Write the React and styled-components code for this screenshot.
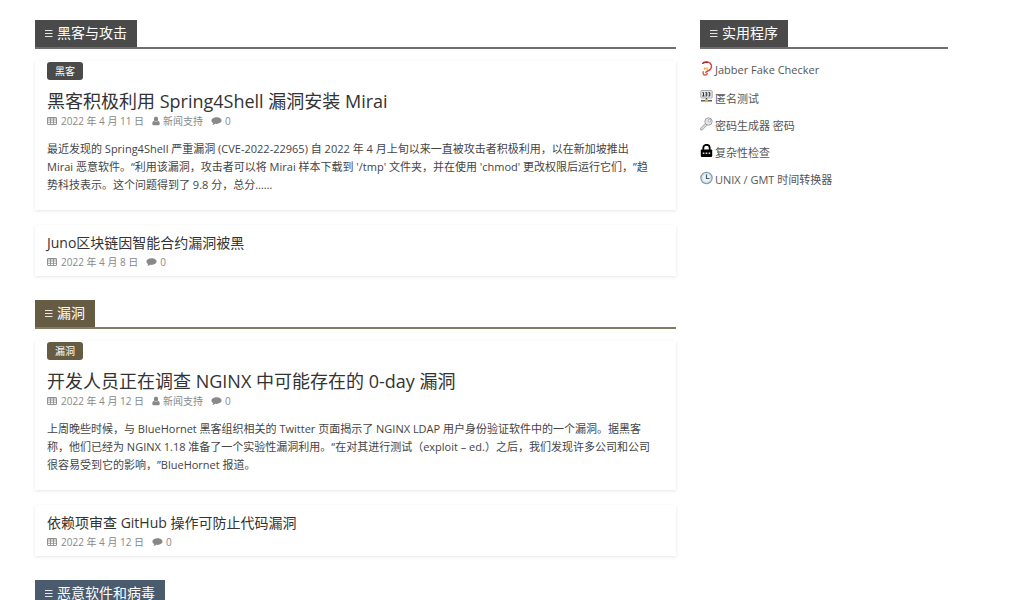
import React from 'react';
import styled, { createGlobalStyle } from 'styled-components';

const GlobalStyle = createGlobalStyle`
  * {
    box-sizing: border-box;
  }

  body {
    margin: 0;
    background: #fff;
    color: #444;
    font-family: "Open Sans", "Noto Sans CJK SC", sans-serif;
    font-size: 11px;
    line-height: 18px;
    text-spacing-trim: space-all;
  }
`;

const Page = styled.div`
  display: flex;
  align-items: flex-start;
  gap: 24px;
  padding: 20px 76px 0 35px;
`;

const Main = styled.main`
  flex: 641 1 0;
  min-width: 0;
`;

const Sidebar = styled.aside`
  flex: 248 1 0;
  min-width: 0;
`;

const Section = styled.section`
  margin-bottom: 24px;
`;

const SectionHeader = styled.header`
  display: flex;
  height: 29px;
  margin-bottom: 12px;
  border-bottom: 2px solid ${(props) => props.$line};
`;

const SectionTitle = styled.h2`
  display: flex;
  align-items: center;
  gap: 4px;
  margin: 0;
  padding: 0 10px 1px;
  background: ${(props) => props.$color};
  color: #fff;
  font-size: 14px;
  font-weight: 400;
  line-height: 26px;
`;

const Card = styled.article`
  margin-bottom: 15px;
  padding: ${(props) => (props.$lead ? '1px 12px 16px' : '8px 12px 5px')};
  box-shadow: 0 1px 3px rgba(0, 0, 0, 0.1);
`;

const Tag = styled.a`
  display: inline-block;
  margin-bottom: 10px;
  padding: 0 8px;
  border-radius: 3px;
  background: ${(props) => props.$color};
  color: #fff;
  font-size: 10px;
  line-height: 18px;
  text-decoration: none;
  vertical-align: top;
`;

const CardTitle = styled.h3`
  margin: 0;
  font-size: ${(props) => (props.$lead ? '18px' : '14px')};
  font-weight: 400;
  line-height: ${(props) => (props.$lead ? '22px' : '20px')};

  a {
    color: #333;
    text-decoration: none;
  }
`;

const Meta = styled.div`
  display: flex;
  gap: 8px;
  color: #888;
  font-size: 10px;
  line-height: 18px;
`;

const MetaItem = styled.span`
  display: flex;
  align-items: center;
  gap: ${(props) => props.$gap || 3}px;
`;

const Excerpt = styled.p`
  margin: 10px 0 0;
  padding-right: 8px;
`;

const ToolList = styled.ul`
  display: flex;
  flex-direction: column;
  gap: 9px;
  margin: 0;
  padding: 0;
  list-style: none;
`;

const ToolLink = styled.a`
  display: flex;
  align-items: flex-start;
  gap: 2px;
  color: #555;
  text-decoration: none;

  svg {
    flex: none;
    margin-bottom: 4px;
  }
`;

const BarsIcon = () => (
  <svg width="8" height="9" viewBox="0 0 8 9" aria-hidden="true">
    <path d="M0 1.500h7.500M0 4.500h7.500M0 7.500h7.500" stroke="#fff" strokeOpacity="0.85" />
  </svg>
);

const CalendarIcon = () => (
  <svg width="10" height="10" viewBox="0 0 10 10" fill="none" stroke="#888" aria-hidden="true">
    <rect x="0.5" y="1.5" width="9" height="7" rx="0.5" strokeWidth="0.9" />
    <path d="M0.5 2h9M3.5 1.5v7M6.5 1.5v7M0.5 4h9M0.5 6.3h9" strokeWidth="0.8" />
  </svg>
);

const UserIcon = () => (
  <svg width="8" height="10" viewBox="0 0 8 10" fill="#888" aria-hidden="true">
    <ellipse cx="4" cy="3" rx="2.2" ry="2.5" />
    <path d="M2 4.800C.6 5.200.2 6.600.3 8c0 .8.5 1.200 1.200 1.200h5c.7 0 1.200-.4 1.200-1.200.1-1.400-.3-2.800-1.700-3.200-.5.6-1.200.9-2 .9s-1.500-.3-2-.9z" />
  </svg>
);

const CommentIcon = () => (
  <svg width="11" height="10" viewBox="0 0 11 10" fill="#888" aria-hidden="true">
    <path d="M5.500 1.200C2.700 1.200.4 2.700.4 4.600c0 1.100.7 2 1.800 2.600-.1.700-.5 1.300-1.100 1.800 1.300-.1 2.400-.6 3.100-1.200.4.100.9.100 1.300.100 2.800 0 5.100-1.500 5.100-3.300S8.300 1.200 5.500 1.200z" />
  </svg>
);

const JabberIcon = () => (
  <svg width="13" height="16" viewBox="0 0 13 16" fill="none" aria-hidden="true">
    <path d="M2.500 2.600C4 .6 8.500.4 10.300 2.300c2.400 2.600 1.200 6-1.600 7.200-1.700.700-2.900 1-3.200 2.300" stroke="#d8403c" strokeWidth="1.400" />
    <path d="M2.300 2.700c1.500-1.500 3.700-2 5.700-1.300" stroke="#b02222" strokeWidth="1.200" />
    <path d="M3.500 10.300c-1 2-.2 3.700 1.500 3.700 1.300 0 2.300-.8 2.300-2.200" stroke="#dc5a42" strokeWidth="1.400" />
    <path d="M4.300 9l.3-2 1.200 1 1.200-1 .2 2" stroke="#f0bd56" strokeWidth="1.200" />
  </svg>
);

const NetworkIcon = () => (
  <svg width="13" height="14" viewBox="0 0 13 14" aria-hidden="true">
    <rect x="0.800" y="0.500" width="11.400" height="7.500" rx="0.800" fill="#e4e7e9" stroke="#a8adb0" />
    <path d="M2.500 2.500h1V6M2.200 6h2.300M5.500 2.500h1.300v1.700H5.500M6.800 4.200V6H5.500M8.500 2.500h1.300V6H8.500M8.800 4.200h1" stroke="#333" fill="none" />
    <path d="M6.500 8v2.500M1 10.700h11" stroke="#555b5e" strokeWidth="1.400" />
    <rect x="5" y="9.200" width="3" height="3" fill="#edae42" />
  </svg>
);

const KeyIcon = () => (
  <svg width="13" height="14" viewBox="0 0 13 14" fill="none" aria-hidden="true">
    <path d="M6.500 7.200L1.500 12" stroke="#a3a3a3" strokeWidth="3" strokeLinecap="round" />
    <path d="M6.500 7.200L1.700 11.800" stroke="#e1e1e1" strokeWidth="1.400" strokeLinecap="round" />
    <circle cx="8.500" cy="4.500" r="3.700" fill="#e6e6e6" stroke="#a0a0a0" />
    <circle cx="9.500" cy="3.600" r="1.300" fill="#fff" stroke="#999" strokeWidth="0.800" />
  </svg>
);

const LockIcon = () => (
  <svg width="13" height="14" viewBox="0 0 13 14" aria-hidden="true">
    <path d="M3.300 6V4a3.200 3.200 0 0 1 6.400 0v2" fill="none" stroke="#000" strokeWidth="1.800" />
    <rect x="0.800" y="5.500" width="11.400" height="7.500" rx="1" fill="#000" />
    <path d="M2.800 9.300h1.600M5.700 9.300h1.600M8.600 9.300h1.600" stroke="#ddd" strokeWidth="1.400" />
  </svg>
);

const ClockIcon = () => (
  <svg width="13" height="14" viewBox="0 0 13 14" fill="none" aria-hidden="true">
    <circle cx="6.500" cy="7" r="5.600" fill="#edf4f6" stroke="#809cae" strokeWidth="1.300" />
    <circle cx="6.500" cy="7" r="4.200" stroke="#bfd0d8" strokeWidth="0.600" />
    <path d="M6.500 3.500v4h3" stroke="#4d5b63" strokeWidth="1.200" />
  </svg>
);

const sections = [
  {
    title: '黑客与攻击',
    color: '#4a4a4a',
    line: '#6e6e6e',
    lead: {
      tag: '黑客',
      title: '黑客积极利用 Spring4Shell 漏洞安装 Mirai',
      date: '2022 年 4 月 11 日',
      text: '最近发现的 Spring4Shell 严重漏洞 (CVE-2022-22965) 自 2022 年 4 月上旬以来一直被攻击者积极利用，以在新加坡推出 Mirai 恶意软件。“利用该漏洞，攻击者可以将 Mirai 样本下载到 \'/tmp\' 文件夹，并在使用 \'chmod\' 更改权限后运行它们，”趋势科技表示。这个问题得到了 9.8 分，总分……',
    },
    next: { title: 'Juno区块链因智能合约漏洞被黑', date: '2022 年 4 月 8 日' },
  },
  {
    title: '漏洞',
    color: '#665b43',
    line: '#857b65',
    lead: {
      tag: '漏洞',
      title: '开发人员正在调查 NGINX 中可能存在的 0-day 漏洞',
      date: '2022 年 4 月 12 日',
      text: '上周晚些时候，与 BlueHornet 黑客组织相关的 Twitter 页面揭示了 NGINX LDAP 用户身份验证软件中的一个漏洞。据黑客称，他们已经为 NGINX 1.18 准备了一个实验性漏洞利用。“在对其进行测试（exploit – ed.）之后，我们发现许多公司和公司很容易受到它的影响，”BlueHornet 报道。',
    },
    next: { title: '依赖项审查 GitHub 操作可防止代码漏洞', date: '2022 年 4 月 12 日' },
  },
  {
    title: '恶意软件和病毒',
    color: '#4a5b6e',
    line: '#6b7a8b',
  },
];

const tools = [
  { label: 'Jabber Fake Checker', Icon: JabberIcon },
  { label: '匿名测试', Icon: NetworkIcon },
  { label: '密码生成器 密码', Icon: KeyIcon },
  { label: '复杂性检查', Icon: LockIcon },
  { label: 'UNIX / GMT 时间转换器', Icon: ClockIcon },
];

const Heading = ({ title, color, line }) => (
  <SectionHeader $line={line}>
    <SectionTitle $color={color}>
      <BarsIcon />
      {title}
    </SectionTitle>
  </SectionHeader>
);

const PostMeta = ({ date, author }) => (
  <Meta>
    <MetaItem $gap={4}>
      <CalendarIcon />
      <time>{date}</time>
    </MetaItem>
    {author && (
      <MetaItem>
        <UserIcon />
        {author}
      </MetaItem>
    )}
    <MetaItem>
      <CommentIcon />
      0
    </MetaItem>
  </Meta>
);

const Post = ({
  post, color, lead = false, author,
}) => (
  <Card $lead={lead}>
    {post.tag && <Tag href="#" $color={color}>{post.tag}</Tag>}
    <CardTitle $lead={lead}>
      <a href="#">{post.title}</a>
    </CardTitle>
    <PostMeta date={post.date} author={author} />
    {post.text && <Excerpt>{post.text}</Excerpt>}
  </Card>
);

const App = () => (
  <>
    <GlobalStyle />
    <Page>
      <Main>
        {sections.map((section) => (
          <Section key={section.title}>
            <Heading title={section.title} color={section.color} line={section.line} />
            {section.lead && <Post post={section.lead} color={section.color} author="新闻支持" lead />}
            {section.next && <Post post={section.next} />}
          </Section>
        ))}
      </Main>
      <Sidebar>
        <Heading title="实用程序" color="#4a4a4a" line="#6e6e6e" />
        <ToolList>
          {tools.map(({ label, Icon }) => (
            <li key={label}>
              <ToolLink href="#">
                <Icon />
                {label}
              </ToolLink>
            </li>
          ))}
        </ToolList>
      </Sidebar>
    </Page>
  </>
);

export default App;
